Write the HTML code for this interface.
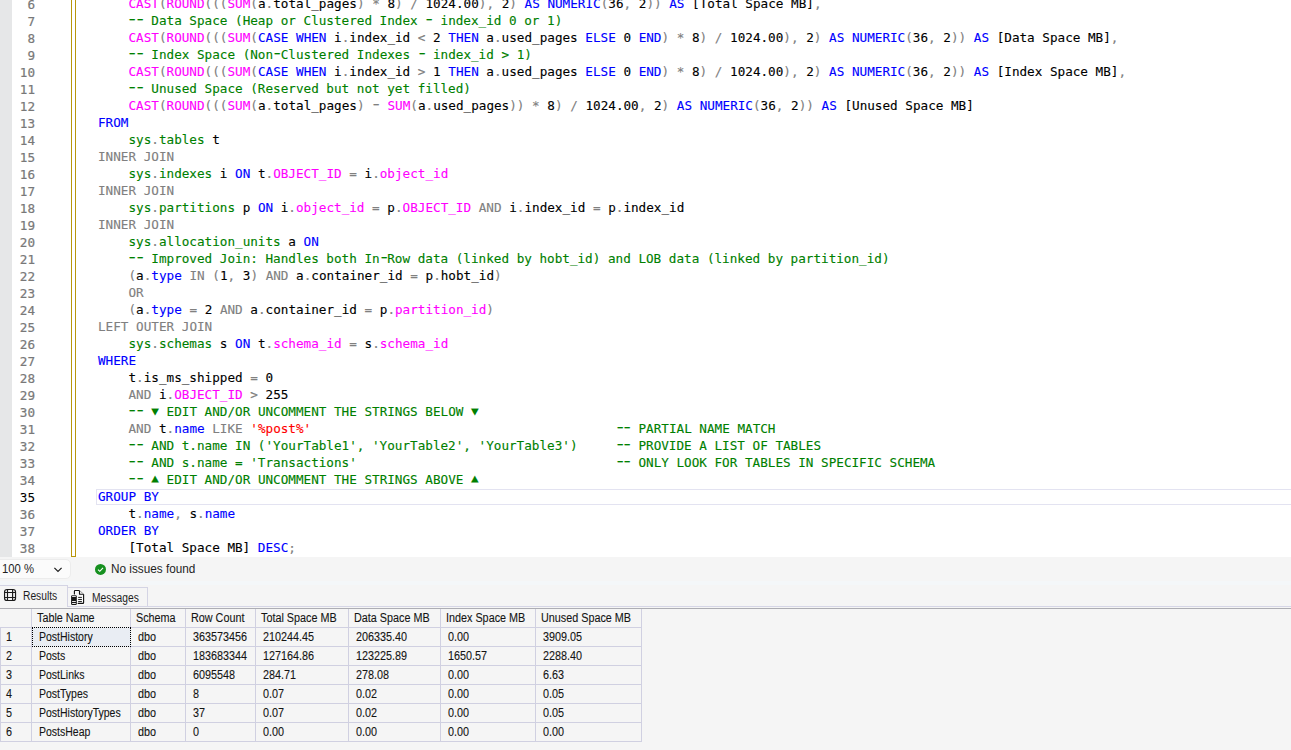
<!DOCTYPE html>
<html><head><meta charset="utf-8"><title>SQL Query</title>
<style>
html,body{margin:0;padding:0;}
body{width:1291px;height:750px;overflow:hidden;background:#f5f5f5;position:relative;font-family:"Liberation Sans",sans-serif;}
#editor{position:absolute;left:0;top:0;width:1291px;height:557px;background:#fff;overflow:hidden;}
#margin{position:absolute;left:0;top:0;width:12px;height:557px;background:#e6e7e8;}
#ybar{position:absolute;left:71px;top:-2px;width:3px;height:557px;border:1px solid #b8960b;}
.ln,.cl{position:absolute;height:17px;line-height:17px;font-family:"DejaVu Sans Mono","Liberation Mono",monospace;font-size:12.65px;white-space:pre;color:#000;}
.ln{left:11px;width:24px;text-align:right;color:#787878;margin-top:1px;-webkit-text-stroke:0.2px currentColor;}
.ln.cur{color:#000;-webkit-text-stroke:0.05px currentColor;}
.cl{left:98px;}
.hy,.td,.tu{display:inline-block;font-style:normal;}
.hy{transform:translate(0.4px,-0.9px) scale(1.62,1.05);}
.td{transform:translateY(-1px) scaleY(.9);}
.tu{transform:translateY(-1.2px) scaleY(.9);}
.cl{-webkit-text-stroke:0.12px currentColor;}
.b{color:#0000ff}.g{color:#808080}.m{color:#ff00ff}.c{color:#008000}.s{color:#ff0000}
#curline{position:absolute;left:96px;top:489px;width:1200px;height:14px;border:1px solid #e3e3f1;}
#status{position:absolute;left:0;top:557px;width:1291px;height:24px;background:#f5f5f5;}
#zoom{position:absolute;left:-6px;top:2px;width:75px;height:18px;border:1px solid #ececec;border-radius:5px;background:#fbfbfb;}
#zoomtxt{position:absolute;left:1.5px;top:5px;font-size:12px;line-height:14px;color:#1e1e1e;white-space:nowrap;transform:scaleX(.94);transform-origin:0 0;}
#noissue{position:absolute;left:111px;top:5px;font-size:12px;line-height:14px;color:#1e1e1e;white-space:nowrap;transform:scaleX(.98);transform-origin:0 0;}
#band{position:absolute;left:0;top:581px;width:1291px;height:4px;background:#f4f7f9;}
#tabs{position:absolute;left:0;top:0;width:0;height:0;}
.tab{position:absolute;}
.tt{position:absolute;font-size:12px;line-height:14px;color:#1e1e1e;white-space:nowrap;transform:scaleX(.855);transform-origin:0 0;}
#t1{left:-1px;top:585px;width:67px;height:21px;border:1px solid #d4d4e4;border-bottom:none;background:#f5f5f5;}
#t2{left:67px;top:587px;width:79px;height:19px;border:1px solid #d4d4e4;border-bottom:none;background:#f5f5f5;}
#gridtop{position:absolute;left:68px;top:606px;width:1223px;height:1px;background:#d6d6e6;}
#gridtop2{position:absolute;left:0;top:608px;width:1291px;height:1px;background:#adadb3;}
#grid{position:absolute;left:0;top:609px;width:700px;height:141px;}
.vl{position:absolute;top:0;width:1px;height:133px;background:#d0d0e1;}
.hl{position:absolute;left:0;width:642px;height:1px;background:#d0d0e1;}
.sel{position:absolute;box-sizing:border-box;background:#e9edf3;border:1px dotted #000;}
.gt{position:absolute;height:18px;line-height:18px;font-size:12px;color:#141414;white-space:nowrap;transform:scaleX(.9);transform-origin:0 0;-webkit-text-stroke:0.1px currentColor;}
.gt.nm{transform:scaleX(.875);}
</style></head><body>
<div id="editor">
<div id="margin"></div>
<div class="ln" style="top:-5px">6</div>
<div class="ln" style="top:12px">7</div>
<div class="ln" style="top:29px">8</div>
<div class="ln" style="top:46px">9</div>
<div class="ln" style="top:63px">10</div>
<div class="ln" style="top:80px">11</div>
<div class="ln" style="top:97px">12</div>
<div class="ln" style="top:114px">13</div>
<div class="ln" style="top:131px">14</div>
<div class="ln" style="top:148px">15</div>
<div class="ln" style="top:165px">16</div>
<div class="ln" style="top:182px">17</div>
<div class="ln" style="top:199px">18</div>
<div class="ln" style="top:216px">19</div>
<div class="ln" style="top:233px">20</div>
<div class="ln" style="top:250px">21</div>
<div class="ln" style="top:267px">22</div>
<div class="ln" style="top:284px">23</div>
<div class="ln" style="top:301px">24</div>
<div class="ln" style="top:318px">25</div>
<div class="ln" style="top:335px">26</div>
<div class="ln" style="top:352px">27</div>
<div class="ln" style="top:369px">28</div>
<div class="ln" style="top:386px">29</div>
<div class="ln" style="top:403px">30</div>
<div class="ln" style="top:420px">31</div>
<div class="ln" style="top:437px">32</div>
<div class="ln" style="top:454px">33</div>
<div class="ln" style="top:471px">34</div>
<div class="ln cur" style="top:488px">35</div>
<div class="ln" style="top:505px">36</div>
<div class="ln" style="top:522px">37</div>
<div class="ln" style="top:539px">38</div>
<div id="ybar"></div>
<div id="curline"></div>
<div class="cl" style="top:-5px">    <span class="m">CAST</span><span class="g">(</span><span class="m">ROUND</span><span class="g">(</span><span class="g">(</span><span class="g">(</span><span class="m">SUM</span><span class="g">(</span>a<span class="g">.</span>total_pages<span class="g">)</span> <span class="g">*</span> 8<span class="g">)</span> <span class="g">/</span> 1024.00<span class="g">)</span><span class="g">,</span> 2<span class="g">)</span> <span class="b">AS</span> <span class="b">NUMERIC</span><span class="g">(</span>36<span class="g">,</span> 2<span class="g">)</span><span class="g">)</span> <span class="b">AS</span> [Total Space MB]<span class="g">,</span></div>
<div class="cl" style="top:12px">    <span class="c"><i class="hy">-</i><i class="hy">-</i> Data Space (Heap or Clustered Index <i class="hy">-</i> index_id 0 or 1)</span></div>
<div class="cl" style="top:29px">    <span class="m">CAST</span><span class="g">(</span><span class="m">ROUND</span><span class="g">(</span><span class="g">(</span><span class="g">(</span><span class="m">SUM</span><span class="g">(</span><span class="b">CASE</span> <span class="b">WHEN</span> i<span class="g">.</span>index_id <span class="g">&lt;</span> 2 <span class="b">THEN</span> a<span class="g">.</span>used_pages <span class="b">ELSE</span> 0 <span class="b">END</span><span class="g">)</span> <span class="g">*</span> 8<span class="g">)</span> <span class="g">/</span> 1024.00<span class="g">)</span><span class="g">,</span> 2<span class="g">)</span> <span class="b">AS</span> <span class="b">NUMERIC</span><span class="g">(</span>36<span class="g">,</span> 2<span class="g">)</span><span class="g">)</span> <span class="b">AS</span> [Data Space MB]<span class="g">,</span></div>
<div class="cl" style="top:46px">    <span class="c"><i class="hy">-</i><i class="hy">-</i> Index Space (Non<i class="hy">-</i>Clustered Indexes <i class="hy">-</i> index_id &gt; 1)</span></div>
<div class="cl" style="top:63px">    <span class="m">CAST</span><span class="g">(</span><span class="m">ROUND</span><span class="g">(</span><span class="g">(</span><span class="g">(</span><span class="m">SUM</span><span class="g">(</span><span class="b">CASE</span> <span class="b">WHEN</span> i<span class="g">.</span>index_id <span class="g">&gt;</span> 1 <span class="b">THEN</span> a<span class="g">.</span>used_pages <span class="b">ELSE</span> 0 <span class="b">END</span><span class="g">)</span> <span class="g">*</span> 8<span class="g">)</span> <span class="g">/</span> 1024.00<span class="g">)</span><span class="g">,</span> 2<span class="g">)</span> <span class="b">AS</span> <span class="b">NUMERIC</span><span class="g">(</span>36<span class="g">,</span> 2<span class="g">)</span><span class="g">)</span> <span class="b">AS</span> [Index Space MB]<span class="g">,</span></div>
<div class="cl" style="top:80px">    <span class="c"><i class="hy">-</i><i class="hy">-</i> Unused Space (Reserved but not yet filled)</span></div>
<div class="cl" style="top:97px">    <span class="m">CAST</span><span class="g">(</span><span class="m">ROUND</span><span class="g">(</span><span class="g">(</span><span class="g">(</span><span class="m">SUM</span><span class="g">(</span>a<span class="g">.</span>total_pages<span class="g">)</span> <span class="g"><i class="hy">-</i></span> <span class="m">SUM</span><span class="g">(</span>a<span class="g">.</span>used_pages<span class="g">)</span><span class="g">)</span> <span class="g">*</span> 8<span class="g">)</span> <span class="g">/</span> 1024.00<span class="g">,</span> 2<span class="g">)</span> <span class="b">AS</span> <span class="b">NUMERIC</span><span class="g">(</span>36<span class="g">,</span> 2<span class="g">)</span><span class="g">)</span> <span class="b">AS</span> [Unused Space MB]</div>
<div class="cl" style="top:114px"><span class="b">FROM</span></div>
<div class="cl" style="top:131px">    <span class="c">sys</span><span class="g">.</span><span class="c">tables</span> t</div>
<div class="cl" style="top:148px"><span class="g">INNER</span> <span class="g">JOIN</span></div>
<div class="cl" style="top:165px">    <span class="c">sys</span><span class="g">.</span><span class="c">indexes</span> i <span class="b">ON</span> t<span class="g">.</span><span class="m">OBJECT_ID</span> <span class="g">=</span> i<span class="g">.</span><span class="m">object_id</span></div>
<div class="cl" style="top:182px"><span class="g">INNER</span> <span class="g">JOIN</span></div>
<div class="cl" style="top:199px">    <span class="c">sys</span><span class="g">.</span><span class="c">partitions</span> p <span class="b">ON</span> i<span class="g">.</span><span class="m">object_id</span> <span class="g">=</span> p<span class="g">.</span><span class="m">OBJECT_ID</span> <span class="g">AND</span> i<span class="g">.</span>index_id <span class="g">=</span> p<span class="g">.</span>index_id</div>
<div class="cl" style="top:216px"><span class="g">INNER</span> <span class="g">JOIN</span></div>
<div class="cl" style="top:233px">    <span class="c">sys</span><span class="g">.</span><span class="c">allocation_units</span> a <span class="b">ON</span></div>
<div class="cl" style="top:250px">    <span class="c"><i class="hy">-</i><i class="hy">-</i> Improved Join: Handles both In<i class="hy">-</i>Row data (linked by hobt_id) and LOB data (linked by partition_id)</span></div>
<div class="cl" style="top:267px">    <span class="g">(</span>a<span class="g">.</span><span class="b">type</span> <span class="g">IN</span> <span class="g">(</span>1<span class="g">,</span> 3<span class="g">)</span> <span class="g">AND</span> a<span class="g">.</span>container_id <span class="g">=</span> p<span class="g">.</span>hobt_id<span class="g">)</span></div>
<div class="cl" style="top:284px">    <span class="g">OR</span></div>
<div class="cl" style="top:301px">    <span class="g">(</span>a<span class="g">.</span><span class="b">type</span> <span class="g">=</span> 2 <span class="g">AND</span> a<span class="g">.</span>container_id <span class="g">=</span> p<span class="g">.</span><span class="m">partition_id</span><span class="g">)</span></div>
<div class="cl" style="top:318px"><span class="g">LEFT</span> <span class="g">OUTER</span> <span class="g">JOIN</span></div>
<div class="cl" style="top:335px">    <span class="c">sys</span><span class="g">.</span><span class="c">schemas</span> s <span class="b">ON</span> t<span class="g">.</span><span class="m">schema_id</span> <span class="g">=</span> s<span class="g">.</span><span class="m">schema_id</span></div>
<div class="cl" style="top:352px"><span class="b">WHERE</span></div>
<div class="cl" style="top:369px">    t<span class="g">.</span>is_ms_shipped <span class="g">=</span> 0</div>
<div class="cl" style="top:386px">    <span class="g">AND</span> i<span class="g">.</span><span class="m">OBJECT_ID</span> <span class="g">&gt;</span> 255</div>
<div class="cl" style="top:403px">    <span class="c"><i class="hy">-</i><i class="hy">-</i> <i class="td">▼</i> EDIT AND/OR UNCOMMENT THE STRINGS BELOW <i class="td">▼</i></span></div>
<div class="cl" style="top:420px">    <span class="g">AND</span> t<span class="g">.</span><span class="b">name</span> <span class="g">LIKE</span> <span class="s">&#x27;%post%&#x27;</span>                                        <span class="c"><i class="hy">-</i><i class="hy">-</i> PARTIAL NAME MATCH</span></div>
<div class="cl" style="top:437px">    <span class="c"><i class="hy">-</i><i class="hy">-</i> AND t.name IN (&#x27;YourTable1&#x27;, &#x27;YourTable2&#x27;, &#x27;YourTable3&#x27;)     <i class="hy">-</i><i class="hy">-</i> PROVIDE A LIST OF TABLES</span></div>
<div class="cl" style="top:454px">    <span class="c"><i class="hy">-</i><i class="hy">-</i> AND s.name = &#x27;Transactions&#x27;                                  <i class="hy">-</i><i class="hy">-</i> ONLY LOOK FOR TABLES IN SPECIFIC SCHEMA</span></div>
<div class="cl" style="top:471px">    <span class="c"><i class="hy">-</i><i class="hy">-</i> <i class="tu">▲</i> EDIT AND/OR UNCOMMENT THE STRINGS ABOVE <i class="tu">▲</i></span></div>
<div class="cl" style="top:488px"><span class="b">GROUP</span> <span class="b">BY</span></div>
<div class="cl" style="top:505px">    t<span class="g">.</span><span class="b">name</span><span class="g">,</span> s<span class="g">.</span><span class="b">name</span></div>
<div class="cl" style="top:522px"><span class="b">ORDER</span> <span class="b">BY</span></div>
<div class="cl" style="top:539px">    [Total Space MB] <span class="b">DESC</span><span class="g">;</span></div>
</div>
<div id="status">
<div id="zoom"></div>
<div id="zoomtxt">100 %</div>
<svg style="position:absolute;left:0;top:0" width="120" height="24" viewBox="0 557 120 24">
<path d="M54.4 567.8L58 571.4L61.6 567.8" fill="none" stroke="#1e1e1e" stroke-width="1.2"/>
<circle cx="100.5" cy="569.4" r="5.5" fill="#16901f"/>
<path d="M98 569.6L99.8 571.3L103 567.9" fill="none" stroke="#fff" stroke-width="1.1"/>
</svg>
<div id="noissue">No issues found</div>
</div>
<div id="band"></div>
<div id="tabs">
<div class="tab" id="t1"></div>
<div class="tab" id="t2"></div>
<div class="tt" style="left:23px;top:589px">Results</div>
<div class="tt" style="left:92px;top:590.5px">Messages</div>
<svg style="position:absolute;left:0;top:585px" width="160" height="24" viewBox="0 585 160 24">
<g fill="none" stroke="#1a1a1a" stroke-width="1.15">
<rect x="4.55" y="589.5" width="11" height="11" rx="2.6"/>
<path d="M7.5 589.5V600.5M12.6 589.5V600.5M4.5 592.5H15.5M4.5 597.5H15.5"/>
</g>
<g>
<path d="M74.4 594V590.5H79.5V594.2H83.6V603.4H78.2" fill="none" stroke="#fff" stroke-width="2.6" opacity=".8"/>
<rect x="70.3" y="594.4" width="7.4" height="11.2" rx="1.5" fill="#fff" opacity=".8"/>
<path d="M74.4 594V591.2Q74.4 590.5 75.1 590.5H78.8Q79.5 590.5 79.5 591.2V594.2H83.6V602.7Q83.6 603.4 82.9 603.4H78.2" fill="none" stroke="#111" stroke-width="1.15" stroke-linecap="round" stroke-linejoin="round"/>
<path d="M79.9 590.8L83.4 594" fill="none" stroke="#8a8a8a" stroke-width=".9"/>
<path d="M78.2 597.45H81.9M78.2 599.5H81.9M78.2 601.5H81.9" fill="none" stroke="#111" stroke-width=".9"/>
<rect x="71.1" y="595.2" width="5.7" height="9.7" rx="1.2" fill="#151515"/>
<path d="M72.1 596.45H75.8M72.1 601.5H75.8M72.1 603.5H75.8" fill="none" stroke="#fff" stroke-width=".9"/>
</g>
</svg>
</div>
<div id="gridtop"></div><div id="gridtop2"></div>
<div id="grid">
<div class="vl" style="left:31px"></div>
<div class="vl" style="left:130px"></div>
<div class="vl" style="left:185px"></div>
<div class="vl" style="left:255px"></div>
<div class="vl" style="left:348px"></div>
<div class="vl" style="left:440px"></div>
<div class="vl" style="left:535px"></div>
<div class="vl" style="left:641px"></div>
<div class="hl" style="top:18px"></div>
<div class="hl" style="top:37px"></div>
<div class="hl" style="top:56px"></div>
<div class="hl" style="top:75px"></div>
<div class="hl" style="top:94px"></div>
<div class="hl" style="top:113px"></div>
<div class="hl" style="top:132px"></div>
<div class="vl" style="left:0;top:18px;height:115px"></div>
<div class="sel" style="left:32px;top:18px;width:99px;height:20px"></div>
<div class="gt h" style="left:37px;top:0px">Table Name</div>
<div class="gt h" style="left:136px;top:0px">Schema</div>
<div class="gt h" style="left:191px;top:0px">Row Count</div>
<div class="gt h" style="left:261px;top:0px">Total Space MB</div>
<div class="gt h" style="left:354px;top:0px">Data Space MB</div>
<div class="gt h" style="left:446px;top:0px">Index Space MB</div>
<div class="gt h" style="left:541px;top:0px">Unused Space MB</div>
<div class="gt" style="left:6px;top:19px">1</div>
<div class="gt nm" style="left:39px;top:19px">PostHistory</div>
<div class="gt" style="left:138px;top:19px">dbo</div>
<div class="gt" style="left:193px;top:19px">363573456</div>
<div class="gt" style="left:263px;top:19px">210244.45</div>
<div class="gt" style="left:356px;top:19px">206335.40</div>
<div class="gt" style="left:448px;top:19px">0.00</div>
<div class="gt" style="left:543px;top:19px">3909.05</div>
<div class="gt" style="left:6px;top:38px">2</div>
<div class="gt nm" style="left:39px;top:38px">Posts</div>
<div class="gt" style="left:138px;top:38px">dbo</div>
<div class="gt" style="left:193px;top:38px">183683344</div>
<div class="gt" style="left:263px;top:38px">127164.86</div>
<div class="gt" style="left:356px;top:38px">123225.89</div>
<div class="gt" style="left:448px;top:38px">1650.57</div>
<div class="gt" style="left:543px;top:38px">2288.40</div>
<div class="gt" style="left:6px;top:57px">3</div>
<div class="gt nm" style="left:39px;top:57px">PostLinks</div>
<div class="gt" style="left:138px;top:57px">dbo</div>
<div class="gt" style="left:193px;top:57px">6095548</div>
<div class="gt" style="left:263px;top:57px">284.71</div>
<div class="gt" style="left:356px;top:57px">278.08</div>
<div class="gt" style="left:448px;top:57px">0.00</div>
<div class="gt" style="left:543px;top:57px">6.63</div>
<div class="gt" style="left:6px;top:76px">4</div>
<div class="gt nm" style="left:39px;top:76px">PostTypes</div>
<div class="gt" style="left:138px;top:76px">dbo</div>
<div class="gt" style="left:193px;top:76px">8</div>
<div class="gt" style="left:263px;top:76px">0.07</div>
<div class="gt" style="left:356px;top:76px">0.02</div>
<div class="gt" style="left:448px;top:76px">0.00</div>
<div class="gt" style="left:543px;top:76px">0.05</div>
<div class="gt" style="left:6px;top:95px">5</div>
<div class="gt nm" style="left:39px;top:95px">PostHistoryTypes</div>
<div class="gt" style="left:138px;top:95px">dbo</div>
<div class="gt" style="left:193px;top:95px">37</div>
<div class="gt" style="left:263px;top:95px">0.07</div>
<div class="gt" style="left:356px;top:95px">0.02</div>
<div class="gt" style="left:448px;top:95px">0.00</div>
<div class="gt" style="left:543px;top:95px">0.05</div>
<div class="gt" style="left:6px;top:114px">6</div>
<div class="gt nm" style="left:39px;top:114px">PostsHeap</div>
<div class="gt" style="left:138px;top:114px">dbo</div>
<div class="gt" style="left:193px;top:114px">0</div>
<div class="gt" style="left:263px;top:114px">0.00</div>
<div class="gt" style="left:356px;top:114px">0.00</div>
<div class="gt" style="left:448px;top:114px">0.00</div>
<div class="gt" style="left:543px;top:114px">0.00</div>
</div>
</body></html>
